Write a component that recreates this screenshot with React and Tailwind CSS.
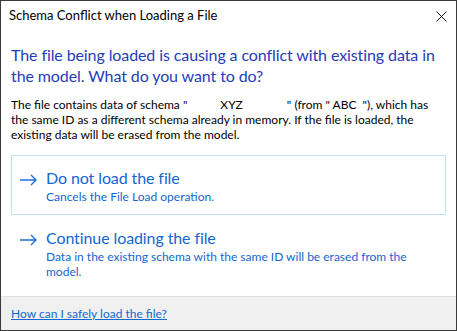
import React from 'react';

function Arrow() {
  return (
    <svg width="19" height="12" viewBox="0 0 19 12" className="shrink-0">
      <path d="M1 6h16M12 1l5 5-5 5" fill="none" stroke="#1f6fd8" strokeWidth="1.4" />
    </svg>
  );
}

function CommandLink({ title, note, boxed }) {
  return (
    <div
      className={
        'flex gap-[8px] pl-[7px] pr-[10px] pt-[12px] pb-[10px] border ' +
        (boxed ? 'border-[#c4e0f6]' : 'border-transparent')
      }
    >
      <div className="pt-[6px]">
        <Arrow />
      </div>
      <div className="text-[#1466d2]">
        <div className="text-[16px] leading-[20px] tracking-[-0.1px]">{title}</div>
        <div className="text-[12px] leading-[15px] mt-[1px]">{note}</div>
      </div>
    </div>
  );
}

export default function App() {
  return (
    <div
      className="w-[457px] h-[331px] flex flex-col bg-white border border-[#3a3a3a]"
      style={{ fontFamily: 'Lato, "Noto Sans", sans-serif' }}
    >
      <div className="h-[30px] flex items-center justify-between pl-[8px] pr-[9px] text-[13px] text-black">
        <span>Schema Conflict when Loading a File</span>
        <svg width="11" height="11" viewBox="0 0 11 11">
          <path d="M0.5 0.5l10 10M10.5 0.5l-10 10" stroke="#111" strokeWidth="1" />
        </svg>
      </div>

      <div className="flex-1 px-[10px] pt-[13px]">
        <h1 className="text-[16px] leading-[21px] tracking-[-0.1px] text-[#1f3db8]">
          The file being loaded is causing a conflict with existing data in the model. What do you want to do?
        </h1>
        <p className="mt-[11px] text-[12px] leading-[15px] text-black">
          The file contains data of schema "<span className="ml-[33px] mr-[44px]">XYZ</span>" (from "&nbsp;ABC&nbsp;&nbsp;"), which has
          <br />
          the same ID as a different schema already in memory. If the file is loaded, the existing data will be erased
          from the model.
        </p>
        <div className="mt-[13px]">
          <CommandLink boxed title="Do not load the file" note="Cancels the File Load operation." />
          <CommandLink
            title="Continue loading the file"
            note="Data in the existing schema with the same ID will be erased from the model."
          />
        </div>
      </div>

      <div className="h-[34px] bg-[#f0f0f0] border-t border-[#dfdfdf] flex items-center px-[10px]">
        <a href="#" className="text-[12px] text-[#1466d2] underline">How can I safely load the file?</a>
      </div>
    </div>
  );
}
